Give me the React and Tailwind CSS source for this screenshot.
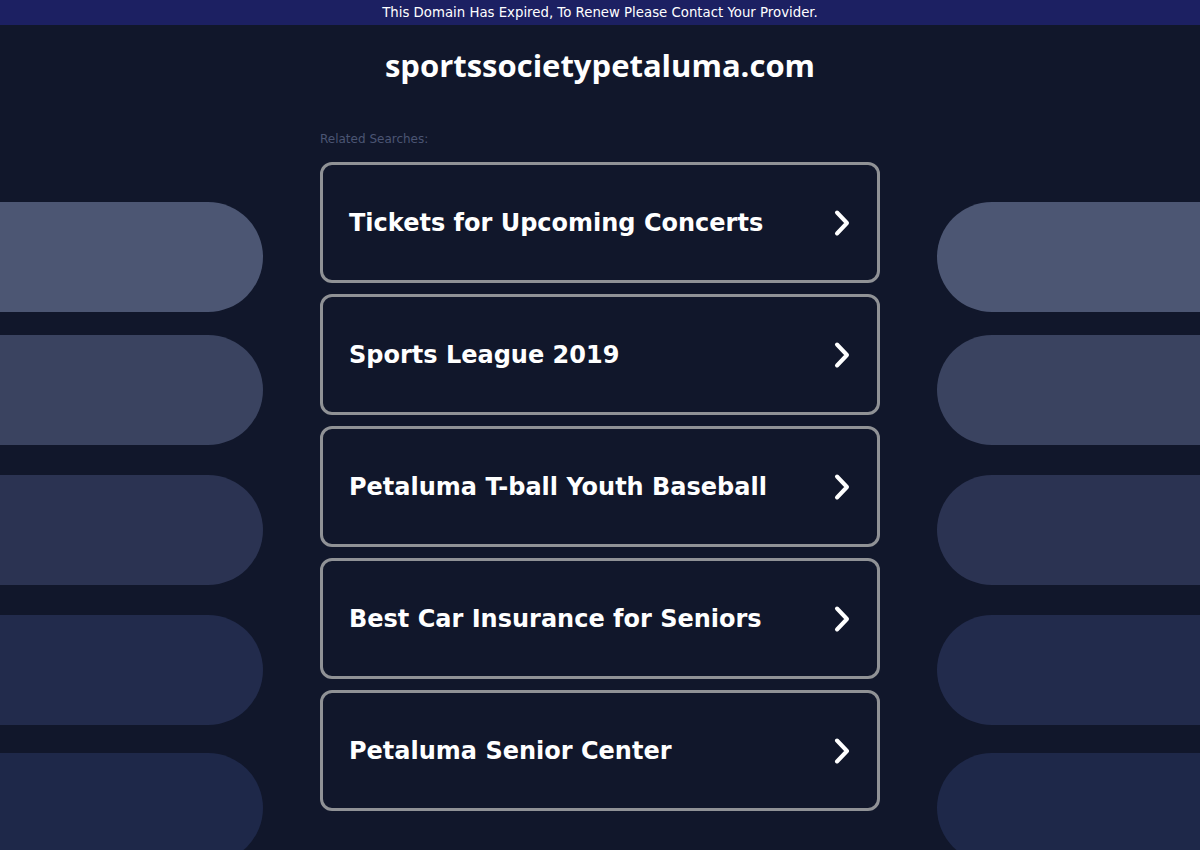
import React from "react";

const searches = [
  "Tickets for Upcoming Concerts",
  "Sports League 2019",
  "Petaluma T-ball Youth Baseball",
  "Best Car Insurance for Seniors",
  "Petaluma Senior Center",
];

const Chevron = () => (
  <svg width="20" height="28" viewBox="0 0 20 28" fill="none" className="shrink-0">
    <path
      d="M6 3.5 L16 14 L6 24.5"
      stroke="white"
      strokeWidth="4"
      strokeLinecap="round"
      strokeLinejoin="round"
    />
  </svg>
);

const SidePills = ({ side }) => {
  const round = side === "left" ? "rounded-r-[55px]" : "rounded-l-[55px]";
  return (
    <div className="w-[263px] shrink-0 flex flex-col pt-[177px]">
      <div className={`h-[110px] bg-[#4c5673] ${round}`} />
      <div className={`h-[110px] mt-[23px] bg-[#3a4360] ${round}`} />
      <div className={`h-[110px] mt-[30px] bg-[#2b3352] ${round}`} />
      <div className={`h-[110px] mt-[30px] bg-[#222b4c] ${round}`} />
      <div className={`h-[110px] mt-[28px] bg-[#1e2849] ${round}`} />
    </div>
  );
};

export default function App() {
  return (
    <div className="w-[1200px] h-[850px] overflow-hidden bg-[#11172b] flex flex-col">
      <div
        className="h-[25px] shrink-0 bg-[#1c2062] text-white text-[13.3px] flex items-center justify-center"
        style={{ fontFamily: '"DejaVu Sans", sans-serif' }}
      >
        This Domain Has Expired, To Renew Please Contact Your Provider.
      </div>
      <div className="flex flex-1 justify-between">
        <SidePills side="left" />
        <div className="w-[560px] shrink-0 flex flex-col">
          <h1
            className="text-white text-[31px] font-bold text-center mt-[21px] leading-[38px]"
            style={{ fontFamily: '"Open Sans", sans-serif' }}
          >
            sportssocietypetaluma.com
          </h1>
          <div
            className="text-[#4b5573] text-[12px] mt-[47px] leading-[16px]"
            style={{ fontFamily: '"DejaVu Sans", sans-serif' }}
          >
            Related Searches:
          </div>
          <div className="flex flex-col gap-[11px] mt-[15px]">
            {searches.map((s) => (
              <a
                key={s}
                href="#"
                className="h-[121px] border-[3px] border-[#909296] rounded-[12px] flex items-center justify-between pl-[26px] pr-[26px] text-white text-[24px] font-bold"
                style={{ fontFamily: '"DejaVu Sans", sans-serif' }}
              >
                <span>{s}</span>
                <Chevron />
              </a>
            ))}
          </div>
        </div>
        <SidePills side="right" />
      </div>
    </div>
  );
}
